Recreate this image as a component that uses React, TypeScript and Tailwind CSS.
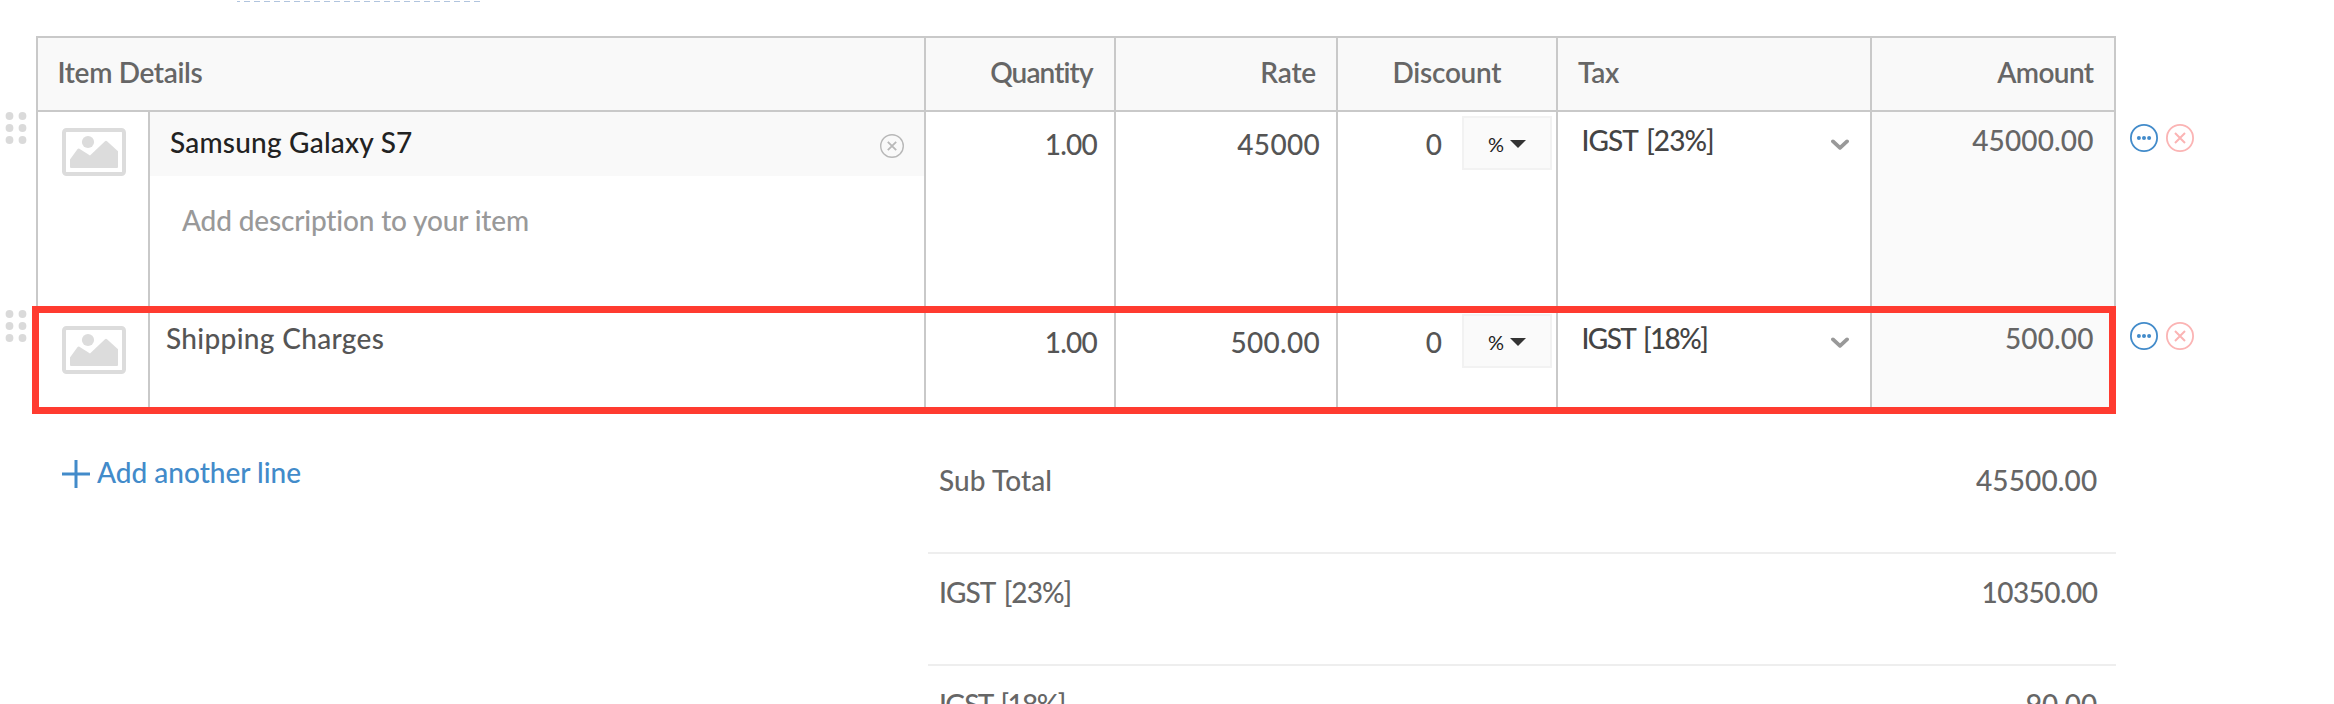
import type { ReactNode } from "react";

const columns = "grid-cols-[112px_776px_190px_222px_220px_314px_244px]";

function DragHandle() {
  return (
    <svg width="24" height="32" viewBox="0 0 24 32" className="fill-[#dadada]">
      {[4, 16, 28].map((y) => (
        <g key={y}>
          <circle cx="5.5" cy={y} r="3.9" />
          <circle cx="18.5" cy={y} r="3.9" />
        </g>
      ))}
    </svg>
  );
}

function ImagePlaceholder() {
  return (
    <svg width="64" height="48" viewBox="0 0 64 48" className="fill-[#dcdcdc]">
      <rect x="2" y="2" width="60" height="44" rx="2.5" fill="none" stroke="#dcdcdc" strokeWidth="4" />
      <circle cx="26" cy="14" r="6.1" />
      <path d="M8 31.5 15.6 20.9Q16.5 20 17.4 20.7L28 27.5 43 13.2Q44 12.4 45 13.2L56 23.3V39Q56 40 55 40H9Q8 40 8 39Z" />
    </svg>
  );
}

function ClearIcon() {
  return (
    <svg width="24" height="24" viewBox="0 0 24 24" fill="none" stroke="#b8b8b8">
      <circle cx="12" cy="12" r="11.3" strokeWidth="1.4" />
      <path d="M7.8 7.8 16.2 16.2M16.2 7.8 7.8 16.2" strokeWidth="1.8" />
    </svg>
  );
}

function MoreIcon() {
  return (
    <svg width="28" height="28" viewBox="0 0 28 28" fill="#428bca">
      <circle cx="14" cy="14" r="13.1" fill="none" stroke="#428bca" strokeWidth="1.8" />
      <circle cx="8.9" cy="14" r="2" />
      <circle cx="14" cy="14" r="2" />
      <circle cx="19.1" cy="14" r="2" />
    </svg>
  );
}

function RemoveIcon() {
  return (
    <svg width="28" height="28" viewBox="0 0 28 28" fill="none" stroke="#fbb4b4">
      <circle cx="14" cy="14" r="13.1" strokeWidth="1.8" />
      <path d="M9 9 19 19M19 9 9 19" strokeWidth="2" />
    </svg>
  );
}

function Chevron() {
  return (
    <svg width="18" height="12" viewBox="0 0 18 12" fill="none" stroke="#999" strokeWidth="3.8" strokeLinecap="round" strokeLinejoin="round">
      <path d="M2 2.4 9 8.8 16 2.4" />
    </svg>
  );
}

function DiscountType() {
  return (
    <div className="ml-5 mt-1 flex h-[54px] w-[90px] border-2 border-[#f2f2f2] bg-[#fafafa] pl-6 text-[#222]">
      <span className="w-[17px] pt-[11px] text-[20px] font-normal leading-[30px] tracking-[-0.5px]">%</span>
      <svg width="16" height="8" viewBox="0 0 16 8" className="ml-[5px] mt-[22px]">
        <path d="M0 0H16L8 8Z" fill="#333" />
      </svg>
    </div>
  );
}

const cell = "border-r-2 border-[#c9c9c9]";

function ItemRow(props: {
  item: ReactNode;
  rate: string;
  tax: ReactNode;
  amount: string;
  height: string;
  highlighted?: boolean;
}) {
  return (
    <div className={`flex ${props.height}`}>
      <div className="w-9 pl-1">
        <DragHandle />
      </div>
      <div className="relative w-[2080px]">
        <div className={`grid h-full border-l-2 border-[#c9c9c9] text-[#555] ${columns} ${props.highlighted ? "" : "border-b-2"}`}>
          <div className={`${cell} pl-6 pt-4`}>
            <ImagePlaceholder />
          </div>
          <div className={cell}>{props.item}</div>
          <div className={`${cell} pr-[17px] pt-[14px] text-right tracking-[-0.8px]`}>1.00</div>
          <div className={`${cell} pr-4 pt-[14px] text-right tracking-[0.3px]`}>{props.rate}</div>
          <div className={`${cell} flex`}>
            <div className="w-[104px] pt-[14px] text-right">0</div>
            <DiscountType />
          </div>
          <div className={`${cell} flex justify-between pl-[23.5px] pr-[21px] pt-[10px] text-[#444]`}>
            {props.tax}
            <div className="pt-[17px]">
              <Chevron />
            </div>
          </div>
          <div className={`${cell} bg-[#fafafa] pr-[20.4px] pt-[10px] text-right tracking-[0.14px] text-[#666]`}>{props.amount}</div>
        </div>
        {props.highlighted && <div className="absolute -bottom-1 -left-1 -top-1 right-0 border-[7px] border-[#ff3b30]" />}
      </div>
      <div className="flex gap-2 pl-[14px] pt-3">
        <MoreIcon />
        <RemoveIcon />
      </div>
    </div>
  );
}

function TotalRow({ label, value, className }: { label: ReactNode; value: ReactNode; className: string }) {
  return (
    <div className={`flex justify-between border-b-2 border-[#eee] pl-[11px] pr-[18.7px] text-[#666] ${className}`}>
      {label}
      {value}
    </div>
  );
}

export default function App() {
  return (
    <div className="h-[704px] w-[2334px] overflow-hidden bg-white font-[Lato,sans-serif] text-[28px] font-medium leading-[36px]">
      <div className="h-9 pl-[237px] pt-px">
        <div className="h-px w-[245px] bg-[repeating-linear-gradient(90deg,#b0c4de_0_3px,transparent_3px_7px,#b0c4de_7px_10px)]" />
      </div>

      <div className={`ml-9 grid h-[76px] w-[2080px] border-2 border-r-0 border-[#c9c9c9] bg-[#f9f9f9] font-semibold text-[#666] ${columns}`}>
        <div className={`${cell} col-span-2 pl-[19.5px] pt-4 tracking-[-0.35px]`}>Item Details</div>
        <div className={`${cell} pr-[21.4px] pt-4 text-right tracking-[-0.9px]`}>Quantity</div>
        <div className={`${cell} pr-5 pt-4 text-right tracking-[-0.2px]`}>Rate</div>
        <div className={`${cell} pl-[54.5px] pt-4 tracking-[-0.25px]`}>Discount</div>
        <div className={`${cell} pl-5 pt-4 tracking-[-0.3px]`}>Tax</div>
        <div className={`${cell} pr-[20.5px] pt-4 text-right tracking-[-0.6px]`}>Amount</div>
      </div>

      <ItemRow
        height="h-[198px]"
        item={
          <>
            <div className="flex h-16 justify-between bg-[#f9f9f9] pl-5 pr-5 pt-3 text-[#222]">
              <span className="tracking-[0.22px]">Samsung Galaxy S7</span>
              <span className="pt-[10px]">
                <ClearIcon />
              </span>
            </div>
            <div className="pl-8 pt-[26px] tracking-[-0.16px] text-[#999]">Add description to your item</div>
          </>
        }
        rate="45000"
        tax={<span className="tracking-[-0.95px] [word-spacing:3px]">IGST [23%]</span>}
        amount="45000.00"
      />
      <ItemRow
        height="h-[100px]"
        item={<div className="pl-4 pt-[10px] tracking-[0.34px]">Shipping Charges</div>}
        rate="500.00"
        tax={<span className="tracking-[-1.6px] [word-spacing:3px]">IGST [18%]</span>}
        amount="500.00"
        highlighted
      />

      <div className="flex">
        <div className="flex w-[928px] pl-[62px] pt-11 text-[#428bca]">
          <svg width="28" height="28" viewBox="0 0 28 28" className="mt-[6px]">
            <path d="M14 0V28M0 14H28" stroke="#428bca" strokeWidth="3" />
          </svg>
          <span className="pl-[7px]">Add another line</span>
        </div>
        <div className="w-[1188px]">
          <TotalRow
            className="h-36 pt-[52px]"
            label={<span className="tracking-[0.1px]">Sub Total</span>}
            value={<span className="tracking-[0.14px]">45500.00</span>}
          />
          <TotalRow
            className="h-28 pt-5"
            label={<span className="tracking-[-0.95px] [word-spacing:3px]">IGST [23%]</span>}
            value={<span className="tracking-[-0.57px]">10350.00</span>}
          />
          <TotalRow
            className="h-28 pt-5"
            label={<span className="tracking-[-1.6px] [word-spacing:3px]">IGST [18%]</span>}
            value={<span>90.00</span>}
          />
        </div>
      </div>
    </div>
  );
}
